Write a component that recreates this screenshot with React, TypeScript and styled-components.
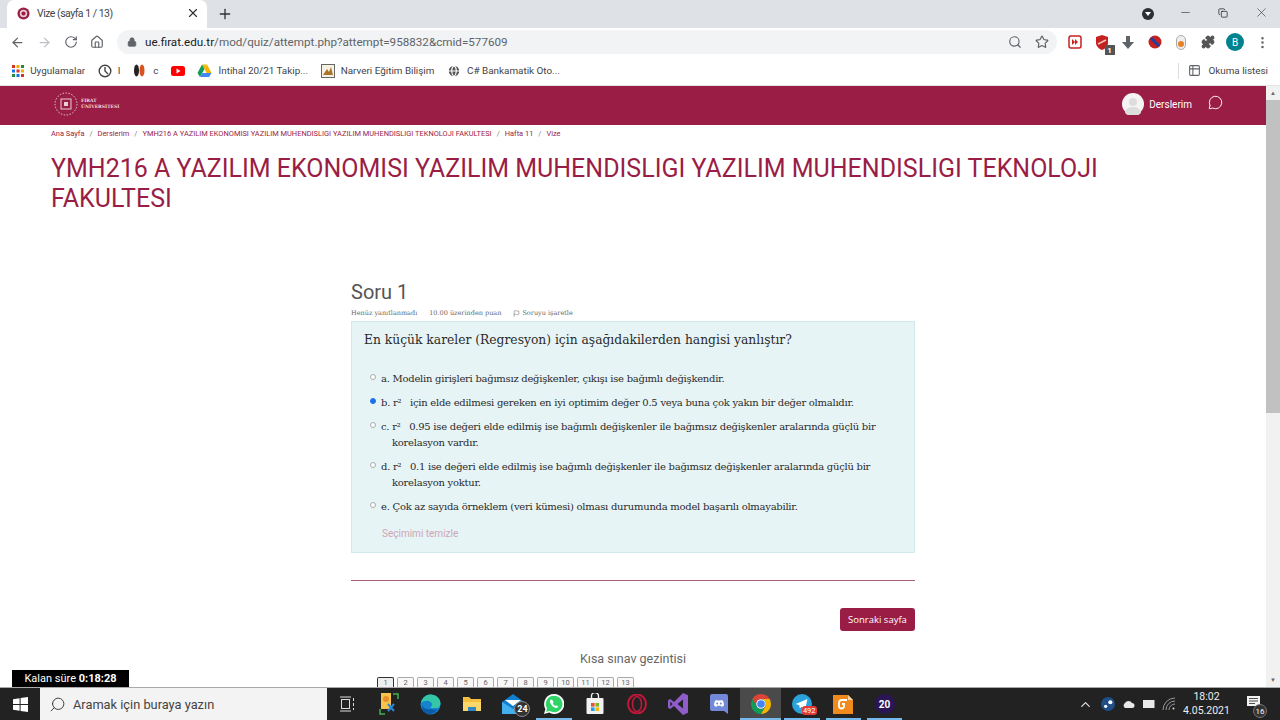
import React from 'react';
import styled, { createGlobalStyle } from 'styled-components';
import {
  ArrowLeft,
  ArrowRight,
  RotateCw,
  Home,
  Lock,
  Search,
  Star,
  Puzzle,
  MoreVertical,
  Plus,
  X,
  Minus,
  Copy,
  MessageCircle,
  Flag,
  Table2,
  ChevronUp,
  Globe,
} from 'lucide-react';

const GlobalStyle = createGlobalStyle`
  html, body {
    margin: 0;
    padding: 0;
    overflow: hidden;
    background: #fff;
  }
  * { box-sizing: border-box; }
`;

const SERIF = '"DejaVu Serif", serif';
const SANS = 'Roboto, "Liberation Sans", sans-serif';
const MAROON = '#9a1d45';

const OPTIONS = [
  { key: 'a', lines: ['a. Modelin girişleri bağımsız değişkenler, çıkışı ise bağımlı değişkendir.'] },
  { key: 'b', selected: true, lines: ['b. r²   için elde edilmesi gereken en iyi optimim değer 0.5 veya buna çok yakın bir değer olmalıdır.'] },
  { key: 'c', lines: ['c. r²   0.95 ise değeri elde edilmiş ise bağımlı değişkenler ile bağımsız değişkenler aralarında güçlü bir', 'korelasyon vardır.'] },
  { key: 'd', lines: ['d. r²   0.1 ise değeri elde edilmiş ise bağımlı değişkenler ile bağımsız değişkenler aralarında güçlü bir', 'korelasyon yoktur.'] },
  { key: 'e', lines: ['e. Çok az sayıda örneklem (veri kümesi) olması durumunda model başarılı olmayabilir.'] },
];

const CRUMBS = [
  'Ana Sayfa',
  'Derslerim',
  'YMH216 A YAZILIM EKONOMISI YAZILIM MUHENDISLIGI YAZILIM MUHENDISLIGI TEKNOLOJI FAKULTESI',
  'Hafta 11',
  'Vize',
];

const APP_COLORS = ['#d93025', '#f9ab00', '#1e8e3e', '#1a73e8', '#d93025', '#f9ab00', '#1e8e3e', '#1a73e8', '#d93025'];

const Favicon = () => (
  <svg width="13" height="13" viewBox="0 0 14 14">
    <circle cx="7" cy="7" r="6.5" fill="#9a1d45" />
    <circle cx="7" cy="7" r="4" fill="#e9c9d2" />
    <circle cx="7" cy="7" r="2.2" fill="#9a1d45" />
  </svg>
);

const AppsGrid = () => (
  <svg width="12" height="12" viewBox="0 0 12 12">
    {APP_COLORS.map((color, i) => (
      <rect key={i} x={(i % 3) * 4.5} y={Math.floor(i / 3) * 4.5} width="3" height="3" fill={color} />
    ))}
  </svg>
);

const Drive = () => (
  <svg width="15" height="14" viewBox="0 0 15 14">
    <polygon points="5,0.5 10,0.5 7.5,5" fill="#f4b400" />
    <polygon points="5,0.5 0.5,9 3,13 7.5,5" fill="#0f9d58" />
    <polygon points="10,0.5 14.5,9 9.5,9 7.5,5" fill="#f4b400" />
    <polygon points="3,13 12,13 14.5,9 5.4,9" fill="#4285f4" />
  </svg>
);

const YouTube = () => (
  <svg width="14" height="10" viewBox="0 0 14 10">
    <rect width="14" height="10" rx="2.5" fill="#f00" />
    <polygon points="5.5,2.5 9.5,5 5.5,7.5" fill="#fff" />
  </svg>
);

const WindowsLogo = () => (
  <svg width="15" height="15" viewBox="0 0 15 15">
    <polygon points="0,2.2 6.6,1.2 6.6,7 0,7" fill="#fff" />
    <polygon points="7.6,1 15,0 15,7 7.6,7" fill="#fff" />
    <polygon points="0,8 6.6,8 6.6,13.8 0,12.8" fill="#fff" />
    <polygon points="7.6,8 15,8 15,15 7.6,14" fill="#fff" />
  </svg>
);

const ChromeLogo = () => (
  <svg width="20" height="20" viewBox="0 0 20 20">
    <path d="M1.34 5A10 10 0 0 1 18.66 5H10A5 5 0 0 0 5.67 12.5Z" fill="#db4437" />
    <path d="M1.34 5A10 10 0 0 0 10 20L14.33 12.5A5 5 0 0 1 5.67 12.5Z" fill="#0f9d58" />
    <path d="M18.66 5A10 10 0 0 1 10 20L14.33 12.5A5 5 0 0 0 10 5Z" fill="#f4b400" />
    <circle cx="10" cy="10" r="4.8" fill="#fff" />
    <circle cx="10" cy="10" r="3.8" fill="#4285f4" />
  </svg>
);

const Edge = () => (
  <svg width="21" height="21" viewBox="0 0 21 21">
    <circle cx="10.5" cy="10.5" r="10" fill="#1583d0" />
    <path d="M1 9C2 3 7 .5 10.5 .5c6 0 10 4 10 9 0 3-2 4.5-4 4.5h-5c-1 0-1-1 0-2 1-1 1-3-1-4C8 6 4 6.5 1 9z" fill="#35c6a8" />
    <path d="M11 15c2 1 4 1 6.5 0-2 4-7 6-11 4.5-3-1.5-5-4.5-4-8 1 3 4 4.5 8.5 3.5z" fill="#0b5aa6" />
  </svg>
);

const Explorer = () => (
  <svg width="20" height="18" viewBox="0 0 20 18">
    <path d="M1 2h6l2 2h10v12H1z" fill="#f5bf3f" />
    <rect x="1" y="7" width="18" height="9" fill="#fbd668" />
    <rect x="6" y="12" width="8" height="4" fill="#2f86c9" />
  </svg>
);

const Mail = () => (
  <svg width="24" height="20" viewBox="0 0 24 20">
    <polygon points="1,8 12,0 23,8 23,20 1,20" fill="#0f7fd0" />
    <polygon points="1,8 12,15 23,8 23,20 1,20" fill="#43b0ee" />
    <polygon points="4,6 20,6 12,12" fill="#fff" />
  </svg>
);

const WhatsApp = () => (
  <svg width="20" height="20" viewBox="0 0 20 20">
    <path d="M10 0a10 10 0 0 0-8.6 15L0 20l5.2-1.4A10 10 0 1 0 10 0z" fill="#fff" />
    <path d="M10 1.8a8.2 8.2 0 0 0-7 12.5L2.2 17.8l3.6-.9A8.2 8.2 0 1 0 10 1.8z" fill="#2fd366" />
    <path d="M7 5.5c-1 .6-1.4 2-.6 3.7 1 2 2.6 3.6 4.8 4.5 1.4.5 2.6 0 3.1-1.1l-2-1.4-1 .8c-1-.4-2-1.4-2.5-2.5l.8-1-1.2-2.5z" fill="#fff" />
  </svg>
);

const Store = () => (
  <svg width="18" height="22" viewBox="0 0 18 22">
    <path d="M5.5 6V3a3.5 3.5 0 0 1 7 0v3" fill="none" stroke="#eee" strokeWidth="1.4" />
    <rect x="0.5" y="5" width="17" height="16" rx="1" fill="#f2f2f2" />
    <rect x="5" y="10" width="3.6" height="3.6" fill="#e8532b" />
    <rect x="9.4" y="10" width="3.6" height="3.6" fill="#7db821" />
    <rect x="5" y="14.4" width="3.6" height="3.6" fill="#1ea3e4" />
    <rect x="9.4" y="14.4" width="3.6" height="3.6" fill="#fbb80f" />
  </svg>
);

const Opera = () => (
  <svg width="20" height="20" viewBox="0 0 20 20">
    <ellipse cx="10" cy="10" rx="9" ry="9.5" fill="none" stroke="#c3173a" strokeWidth="2" />
    <ellipse cx="10" cy="10" rx="4.5" ry="7.5" fill="none" stroke="#c3173a" strokeWidth="1.6" />
  </svg>
);

const VisualStudio = () => (
  <svg width="20" height="22" viewBox="0 0 20 22">
    <path d="M15 0l5 2.2v17.6L15 22 6 13l-3.8 3L0 14.8V7.2L2.2 6 6 9zM15 6.5L9.5 11l5.5 4.5zM2.3 8.5v5L4.5 11z" fill="#8f5cc9" />
  </svg>
);

const Discord = () => (
  <svg width="18" height="20" viewBox="0 0 18 20">
    <path d="M2 0h14a2 2 0 0 1 2 2v18l-4-3H2a2 2 0 0 1-2-2V2a2 2 0 0 1 2-2z" fill="#7289da" />
    <path d="M4 11.5c0-3 1-5 2-5.500l1.500.5h3L12 6c1 .5 2 2.500 2 5.500-1 .9-2 1.200-2.600 1.200l-.6-.9H7.200l-.6.9C6 12.700 5 12.400 4 11.500z" fill="#fff" />
    <circle cx="7.2" cy="9.6" r="1" fill="#7289da" />
    <circle cx="10.8" cy="9.6" r="1" fill="#7289da" />
  </svg>
);

const Telegram = () => (
  <svg width="20" height="20" viewBox="0 0 22 22">
    <circle cx="11" cy="11" r="11" fill="#2aa3dd" />
    <polygon points="4,11 17,5.5 14.5,17 10.5,14 8.5,16 8,12.5" fill="#fff" />
  </svg>
);

const Foxit = () => (
  <svg width="20" height="20" viewBox="0 0 20 20">
    <path d="M0 1h15l5 5v14H0z" fill="#f08a1d" />
    <path d="M15 1l5 5h-5z" fill="#fbd49c" />
    <path d="M14 6H9a3 3 0 0 0-3 3v3a2.5 2.5 0 0 0 5 0V10H9" fill="none" stroke="#fff" strokeWidth="1.8" />
  </svg>
);

const Steam = () => (
  <svg width="14" height="14" viewBox="0 0 12 12">
    <circle cx="6" cy="6" r="6" fill="#1f4f86" />
    <circle cx="8" cy="4.5" r="1.8" fill="#fff" />
    <circle cx="4" cy="8" r="1.4" fill="#fff" />
  </svg>
);

const Wifi = () => (
  <svg width="14" height="14" viewBox="0 0 14 14" fill="none" stroke="#999" strokeWidth="1">
    <path d="M1 13A12 12 0 0 1 13 1" />
    <path d="M4 13a9 9 0 0 1 9-9" />
    <path d="M7 13a6 6 0 0 1 6-6" />
    <circle cx="11.5" cy="11.5" r="1" fill="#ddd" stroke="none" />
  </svg>
);

const LogoMark = () => (
  <svg width="24" height="24" viewBox="0 0 24 24" fill="none" stroke="#e8ccd6">
    <circle cx="12" cy="12" r="11" strokeDasharray="1.5 1.5" strokeWidth="1" />
    <rect x="7" y="7" width="10" height="10" strokeWidth="1" />
    <rect x="10" y="10" width="4" height="4" fill="#e8ccd6" stroke="none" />
  </svg>
);

const App: React.FC = () => {
  return (
    <Screen>
      <GlobalStyle />
      <TabStrip>
        <Tab>
          <Favicon />
          <TabTitle>Vize (sayfa 1 / 13)</TabTitle>
          <X size={14} color="#333" />
        </Tab>
        <NewTab>
          <Plus size={16} color="#333" />
        </NewTab>
        <StripSpacer />
        <ProfileDot />
        <WindowButton>
          <Minus size={13} strokeWidth={1.2} color="#333" />
        </WindowButton>
        <WindowButton>
          <Copy size={10} strokeWidth={1.8} color="#222" />
        </WindowButton>
        <WindowButton>
          <X size={15} strokeWidth={1} color="#333" />
        </WindowButton>
      </TabStrip>

      <Toolbar>
        <NavIcons>
          <ArrowLeft size={15} color="#5f6368" />
          <ArrowRight size={15} color="#bdc1c6" />
          <RotateCw size={14} color="#5f6368" />
          <Home size={14} color="#5f6368" />
        </NavIcons>
        <Omnibox>
          <Lock size={10} color="#5f6368" fill="#5f6368" />
          <UrlText>
            <strong>ue.firat.edu.tr</strong>/mod/quiz/attempt.php?attempt=958832&amp;cmid=577609
          </UrlText>
          <OmniIcons>
            <Search size={14} color="#5f6368" />
            <Star size={14} color="#5f6368" />
          </OmniIcons>
        </Omnibox>
        <Extensions>
          <ExtIcon>
            <svg width="14" height="14" viewBox="0 0 14 14">
              <rect x="1" y="1" width="12" height="12" rx="2" fill="none" stroke="#c5221f" strokeWidth="1.5" />
              <polygon points="4,4 7,7 4,10" fill="#c5221f" />
              <polygon points="7,4 10,7 7,10" fill="#c5221f" />
            </svg>
          </ExtIcon>
          <ExtIcon>
            <svg width="14" height="15" viewBox="0 0 14 15">
              <path d="M7 0l6 2v6c0 3-3 6-6 7-3-1-6-4-6-7V2z" fill="#c5221f" />
              <path d="M3 9l8-4" stroke="#f3c6c4" strokeWidth="1.5" />
            </svg>
            <ExtBadge>1</ExtBadge>
          </ExtIcon>
          <ExtIcon>
            <svg width="12" height="13" viewBox="0 0 12 13">
              <polygon points="4,0 8,0 8,6 12,6 6,13 0,6 4,6" fill="#5f6368" />
            </svg>
          </ExtIcon>
          <ExtIcon>
            <svg width="14" height="14" viewBox="0 0 14 14">
              <circle cx="7" cy="7" r="6.5" fill="#c5221f" />
              <path d="M3 3l8 8" stroke="#1f3f9e" strokeWidth="3" />
            </svg>
          </ExtIcon>
          <ExtIcon>
            <svg width="10" height="15" viewBox="0 0 10 15">
              <rect x="0.5" y="0.5" width="9" height="14" rx="4.5" fill="#eee" stroke="#aaa" />
              <circle cx="5" cy="9" r="3" fill="#e8822a" />
            </svg>
          </ExtIcon>
          <ExtIcon>
            <Puzzle size={14} color="#555" fill="#555" />
          </ExtIcon>
          <Avatar>B</Avatar>
          <MoreVertical size={15} color="#5f6368" />
        </Extensions>
      </Toolbar>

      <BookmarkBar>
        <Bookmark>
          <AppsGrid />
          <span>Uygulamalar</span>
        </Bookmark>
        <Bookmark>
          <svg width="14" height="14" viewBox="0 0 14 14" fill="none" stroke="#444" strokeWidth="1.4">
            <circle cx="7" cy="7" r="5.8" />
            <path d="M7 3v4l3 3" />
          </svg>
          <span>I</span>
        </Bookmark>
        <Bookmark>
          <svg width="14" height="13" viewBox="0 0 14 13">
            <ellipse cx="3.5" cy="6.5" rx="2.5" ry="6" fill="#222" />
            <ellipse cx="9" cy="6.5" rx="2.5" ry="6" fill="#d9531e" />
          </svg>
          <span>c</span>
        </Bookmark>
        <Bookmark>
          <YouTube />
        </Bookmark>
        <Bookmark>
          <Drive />
          <span>İntihal 20/21 Takip...</span>
        </Bookmark>
        <Bookmark>
          <svg width="14" height="14" viewBox="0 0 14 14">
            <rect x="0.5" y="0.5" width="13" height="13" fill="#f6f1e2" stroke="#666" />
            <path d="M2 11l4-6 2 3 2-5 2 8z" fill="#a8742a" />
          </svg>
          <span>Narveri Eğitim Bilişim</span>
        </Bookmark>
        <Bookmark>
          <Globe size={14} color="#fff" fill="#555" />
          <span>C# Bankamatik Oto...</span>
        </Bookmark>
        <StripSpacer />
        <ReadingList>
          <Table2 size={13} color="#5f6368" />
          <span>Okuma listesi</span>
        </ReadingList>
      </BookmarkBar>

      <Viewport>
        <PageScroll>
          <Navbar>
            <Brand>
              <LogoMark />
              <BrandText>
                <span>FIRAT</span>
                <span>ÜNİVERSİTESİ</span>
              </BrandText>
            </Brand>
            <NavRight>
              <UserPic>
                <svg width="22" height="22" viewBox="0 0 22 22">
                  <circle cx="11" cy="11" r="11" fill="#f4f4f4" />
                  <circle cx="11" cy="9" r="4" fill="#ddd" />
                  <path d="M3 20c1-5 4-6 8-6s7 1 8 6a11 11 0 0 1-16 0z" fill="#ddd" />
                </svg>
              </UserPic>
              <NavLabel>Derslerim</NavLabel>
              <MessageCircle size={15} color="#fff" strokeWidth={1.5} />
            </NavRight>
          </Navbar>

          <Breadcrumb>
            {CRUMBS.map((crumb, i) => (
              <React.Fragment key={crumb}>
                {i > 0 && <CrumbSep>/</CrumbSep>}
                <span>{crumb}</span>
              </React.Fragment>
            ))}
          </Breadcrumb>

          <CourseTitle>YMH216 A YAZILIM EKONOMISI YAZILIM MUHENDISLIGI YAZILIM MUHENDISLIGI TEKNOLOJI FAKULTESI</CourseTitle>

          <QuizColumn>
            <QuestionTitle>Soru 1</QuestionTitle>
            <QuestionInfo>
              <span>Henüz yanıtlanmadı</span>
              <span>10.00 üzerinden puan</span>
              <FlagLink>
                <Flag size={7} color="#777" />
                Soruyu işaretle
              </FlagLink>
            </QuestionInfo>
            <QuestionCard>
              <QuestionText>En küçük kareler (Regresyon) için aşağıdakilerden hangisi yanlıştır?</QuestionText>
              <Answers>
                {OPTIONS.map(opt => (
                  <Answer key={opt.key}>
                    <Radio $selected={!!opt.selected} />
                    <div>
                      {opt.lines.map((line, i) => (
                        <AnswerLine key={line} $indent={i > 0}>
                          {line}
                        </AnswerLine>
                      ))}
                    </div>
                  </Answer>
                ))}
              </Answers>
              <ClearChoice>Seçimimi temizle</ClearChoice>
            </QuestionCard>
            <Divider />
            <NextRow>
              <NextButton>Sonraki sayfa</NextButton>
            </NextRow>
            <QuizNavTitle>Kısa sınav gezintisi</QuizNavTitle>
            <QuizNavButtons>
              {Array.from({ length: 13 }, (_, i) => (
                <PageBox key={i} $current={i === 0}>
                  {i + 1}
                </PageBox>
              ))}
            </QuizNavButtons>
          </QuizColumn>
        </PageScroll>
        <Scrollbar>
          <ScrollArrow>▲</ScrollArrow>
          <ScrollThumb />
          <ScrollArrow>▼</ScrollArrow>
        </Scrollbar>
        <Timer>
          Kalan süre <b>0:18:28</b>
        </Timer>
      </Viewport>

      <Taskbar>
        <StartButton>
          <WindowsLogo />
        </StartButton>
        <SearchBox>
          <MirroredIcon>
            <Search size={17} color="#333" strokeWidth={1.3} />
          </MirroredIcon>
          <span>Aramak için buraya yazın</span>
        </SearchBox>
        <TaskIcons>
          <TaskIcon>
            <svg width="16" height="16" viewBox="0 0 16 16" fill="none" stroke="#ddd" strokeWidth="1">
              <rect x="1.5" y="3.5" width="8" height="9" />
              <path d="M0 1h11M0 15h11M13.5 2v3M13.5 7v3M13.5 12v2" />
            </svg>
          </TaskIcon>
          <TaskIcon>
            <svg width="20" height="22" viewBox="0 0 20 22">
              <rect x="2" y="0" width="10" height="16" fill="#f5c24a" />
              <circle cx="7" cy="6" r="3" fill="#e88e2e" />
              <path d="M9 11l6 7M15 11l-6 7" stroke="#2b88d8" strokeWidth="2" />
              <path d="M1 16v5h5M19 6V1h-5" stroke="#3fb34f" strokeWidth="1.5" fill="none" />
            </svg>
          </TaskIcon>
          <TaskIcon>
            <Edge />
          </TaskIcon>
          <TaskIcon>
            <Explorer />
          </TaskIcon>
          <TaskIcon>
            <Mail />
            <CountBadge>24</CountBadge>
          </TaskIcon>
          <TaskIcon $open>
            <WhatsApp />
          </TaskIcon>
          <TaskIcon>
            <Store />
          </TaskIcon>
          <TaskIcon>
            <Opera />
          </TaskIcon>
          <TaskIcon>
            <VisualStudio />
          </TaskIcon>
          <TaskIcon>
            <Discord />
          </TaskIcon>
          <TaskIcon $open $active>
            <ChromeLogo />
          </TaskIcon>
          <TaskIcon $open>
            <Telegram />
            <RedBadge>492</RedBadge>
          </TaskIcon>
          <TaskIcon $open>
            <Foxit />
          </TaskIcon>
          <TaskIcon $open>
            <PurpleCircle>20</PurpleCircle>
          </TaskIcon>
        </TaskIcons>
        <Tray>
          <ChevronUp size={15} color="#ddd" />
          <Steam />
          <svg width="13" height="8" viewBox="0 0 13 8">
            <path d="M3 8a3 3 0 0 1 0-5 4 4 0 0 1 7 0 2.5 2.5 0 0 1 0 5z" fill="#e8e8e8" />
          </svg>
          <svg width="12" height="8" viewBox="0 0 12 8">
            <rect x="0.5" y="0.5" width="10.5" height="7" fill="#e8e8e8" stroke="#e8e8e8" />
          </svg>
          <Wifi />
        </Tray>
        <Clock>
          <span>18:02</span>
          <span>4.05.2021</span>
        </Clock>
        <Notify>
          <svg width="13" height="12" viewBox="0 0 13 12">
            <path d="M0 0h13v10H0z" fill="#f2f2f2" />
            <path d="M2 2.5h9M2 5h9M2 7.5h6" stroke="#222" strokeWidth="0.8" />
          </svg>
          <NotifyCount>16</NotifyCount>
        </Notify>
      </Taskbar>
    </Screen>
  );
};

const Screen = styled.div`
  width: 1280px;
  height: 720px;
  display: flex;
  flex-direction: column;
  overflow: hidden;
  background: #fff;
  font-family: ${SANS};
`;

const TabStrip = styled.div`
  height: 28px;
  flex: none;
  display: flex;
  align-items: flex-end;
  background: #dee1e6;
  padding-left: 7px;
`;

const Tab = styled.div`
  width: 200px;
  height: 28px;
  background: #fff;
  border-radius: 7px 7px 0 0;
  display: flex;
  align-items: center;
  padding: 0 7px 2px 10px;
  gap: 6px;
`;

const TabTitle = styled.span`
  flex: 1;
  font-size: 10.5px;
  letter-spacing: -0.5px;
  color: #444;
  padding-left: 1px;
`;

const NewTab = styled.div`
  width: 36px;
  height: 28px;
  display: flex;
  align-items: center;
  justify-content: center;
  padding-bottom: 1px;
`;

const StripSpacer = styled.div`
  flex: 1;
`;

const ProfileDot = styled.div`
  width: 12px;
  height: 12px;
  border-radius: 50%;
  background: #2c2f33;
  align-self: center;
  margin-right: 12px;
  position: relative;

  &::after {
    content: '';
    position: absolute;
    left: 3px;
    top: 4px;
    border: 3px solid transparent;
    border-top: 4px solid #fff;
  }
`;

const WindowButton = styled.div`
  width: 38px;
  height: 28px;
  display: flex;
  align-items: center;
  justify-content: center;
  padding-bottom: 3px;
`;

const Toolbar = styled.div`
  height: 28px;
  flex: none;
  display: flex;
  align-items: center;
  background: #fff;
  padding: 2px 0 2px 10px;
`;

const NavIcons = styled.div`
  display: flex;
  align-items: center;
  gap: 12px;
  width: 107px;
`;

const Omnibox = styled.div`
  width: 940px;
  height: 24px;
  background: #f1f3f4;
  border-radius: 12px;
  display: flex;
  align-items: center;
  padding: 0 8px 0 10px;
`;

const UrlText = styled.div`
  flex: 1;
  margin-left: 8px;
  font-size: 11.66px;
  color: #5f6368;

  strong {
    font-weight: 400;
    color: #202124;
  }
`;

const OmniIcons = styled.div`
  display: flex;
  align-items: center;
  gap: 13px;
`;

const Extensions = styled.div`
  flex: 1;
  display: flex;
  align-items: center;
  padding-left: 10px;
  gap: 10.5px;
`;

const ExtIcon = styled.div`
  width: 16px;
  height: 16px;
  display: flex;
  align-items: center;
  justify-content: center;
  position: relative;
`;

const ExtBadge = styled.span`
  position: absolute;
  right: -5px;
  bottom: -5px;
  width: 10px;
  height: 10px;
  background: #555;
  color: #fff;
  font-size: 8px;
  font-weight: 700;
  display: flex;
  align-items: center;
  justify-content: center;
`;

const Avatar = styled.div`
  width: 18px;
  height: 18px;
  border-radius: 50%;
  background: #00838f;
  color: #fff;
  font-size: 10px;
  display: flex;
  align-items: center;
  justify-content: center;
`;

const BookmarkBar = styled.div`
  height: 30px;
  flex: none;
  display: flex;
  align-items: center;
  background: #fff;
  padding: 0 12px;
  gap: 12.5px;
  border-bottom: 1px solid #e3e4e6;
  font-size: 9.9px;
  color: #444;
`;

const Bookmark = styled.div`
  display: flex;
  align-items: center;
  gap: 6.2px;
  white-space: nowrap;
`;

const ReadingList = styled.div`
  display: flex;
  align-items: center;
  gap: 7px;
  height: 16px;
  padding-left: 9px;
  border-left: 1px solid #ddd;
`;

const Viewport = styled.div`
  flex: 1;
  min-height: 0;
  display: flex;
  position: relative;
  overflow: hidden;
`;

const PageScroll = styled.div`
  flex: 1;
  min-width: 0;
  overflow: hidden;
`;

const Navbar = styled.div`
  height: 39px;
  background: ${MAROON};
  display: flex;
  align-items: center;
  justify-content: space-between;
  padding: 0 43px 3px 54px;
`;

const Brand = styled.div`
  display: flex;
  align-items: center;
  gap: 3px;
`;

const BrandText = styled.div`
  display: flex;
  flex-direction: column;
  font-family: ${SERIF};
  font-size: 4.5px;
  line-height: 6px;
  color: #f0d7df;
  font-weight: 700;
`;

const NavRight = styled.div`
  display: flex;
  align-items: center;

  > svg {
    margin-top: -3px;
  }
`;

const UserPic = styled.div`
  width: 22px;
  height: 22px;
  display: flex;
  margin-right: 5px;
`;

const NavLabel = styled.span`
  color: #fff;
  font-size: 10px;
  margin-right: 16px;
`;

const Breadcrumb = styled.div`
  display: flex;
  align-items: center;
  gap: 5px;
  padding: 1px 0 0 51px;
  height: 15px;
  font-size: 7.45px;
  color: ${MAROON};
  white-space: nowrap;
`;

const CrumbSep = styled.span`
  color: #777;
`;

const CourseTitle = styled.h1`
  margin: 14px 0 0;
  padding: 0 150px 0 51px;
  font-family: ${SANS};
  font-weight: 400;
  font-size: 25px;
  line-height: 30px;
  color: ${MAROON};
`;

const QuizColumn = styled.div`
  width: 564px;
  margin: 65px 0 0 351px;
`;

const QuestionTitle = styled.h2`
  margin: 0;
  font-family: ${SANS};
  font-weight: 400;
  font-size: 20px;
  line-height: 26px;
  color: #555;
`;

const QuestionInfo = styled.div`
  display: flex;
  align-items: center;
  gap: 12px;
  height: 16px;
  font-family: ${SERIF};
  font-size: 6.5px;
  color: #666;
`;

const FlagLink = styled.span`
  display: flex;
  align-items: center;
  gap: 2px;
`;

const QuestionCard = styled.div`
  height: 232px;
  background: #e7f4f6;
  border: 1px solid #d2e9ec;
  padding: 8px 12px;
  font-family: ${SERIF};
  color: #2b2b2b;
`;

const QuestionText = styled.div`
  font-size: 12.3px;
  line-height: 20px;
`;

const Answers = styled.div`
  margin-top: 21px;
  display: flex;
  flex-direction: column;
  gap: 8px;
`;

const Answer = styled.div`
  display: flex;
  align-items: flex-start;
`;

const Radio = styled.span<{ $selected: boolean }>`
  flex: none;
  width: 6px;
  height: 6px;
  margin: 3px 5px 0 6px;
  border-radius: 50%;
  border: 1px solid ${p => (p.$selected ? '#1a73e8' : '#aaa')};
  background: ${p => (p.$selected ? '#1a73e8' : '#fff')};
`;

const AnswerLine = styled.div<{ $indent: boolean }>`
  white-space: pre;
  font-size: 10px;
  letter-spacing: -0.26px;
  line-height: 16px;
  padding-left: ${p => (p.$indent ? '11px' : '0')};
`;

const ClearChoice = styled.div`
  margin: 12px 0 0 18px;
  font-family: ${SANS};
  font-size: 10px;
  line-height: 14px;
  color: #cda5b5;
`;

const Divider = styled.div`
  height: 1px;
  background: #a85a76;
  margin-top: 27px;
`;

const NextRow = styled.div`
  display: flex;
  justify-content: flex-end;
  margin-top: 27px;
`;

const NextButton = styled.div`
  width: 75px;
  height: 23px;
  display: flex;
  align-items: center;
  justify-content: center;
  background: ${MAROON};
  border-radius: 3px;
  color: #fff;
  font-family: "Open Sans", sans-serif;
  font-size: 9.5px;
`;

const QuizNavTitle = styled.div`
  text-align: center;
  margin-top: 20px;
  font-size: 12.5px;
  line-height: 16px;
  color: #666;
`;

const QuizNavButtons = styled.div`
  display: flex;
  gap: 3px;
  margin: 10px 0 0 26px;
`;

const PageBox = styled.div<{ $current: boolean }>`
  width: 17px;
  height: 10px;
  border: 1px solid ${p => (p.$current ? '#333' : '#aaa')};
  border-bottom: 0;
  border-radius: 2px 2px 0 0;
  background: ${p => (p.$current ? '#eee' : '#f8f8f8')};
  font-size: 7.5px;
  color: #666;
  text-align: center;
  line-height: 9px;
`;

const Scrollbar = styled.div`
  flex: none;
  width: 14px;
  background: #f1f1f1;
  display: flex;
  flex-direction: column;
`;

const ScrollArrow = styled.div`
  height: 14px;
  flex: none;
  font-size: 6px;
  line-height: 14px;
  text-align: center;
  color: #666;
`;

const ScrollThumb = styled.div`
  height: 313px;
  background: #c1c1c1;
  margin-bottom: auto;
`;

const Timer = styled.div`
  position: absolute;
  left: 12px;
  bottom: 0;
  width: 117px;
  height: 17px;
  background: #000;
  color: #fff;
  font-size: 11px;
  line-height: 17px;
  text-align: center;
`;

const Taskbar = styled.div`
  height: 33px;
  flex: none;
  display: flex;
  align-items: center;
  background: #222;
  border-top: 1px solid #aaa;
  color: #fff;
`;

const StartButton = styled.div`
  width: 40px;
  display: flex;
  justify-content: center;
`;

const SearchBox = styled.div`
  width: 287px;
  height: 32px;
  background: #f3f3f3;
  display: flex;
  align-items: center;
  gap: 7px;
  padding-left: 9px;
  font-size: 12.8px;
  color: #444;
`;

const MirroredIcon = styled.span`
  display: flex;
  transform: scaleX(-1);
`;

const TaskIcons = styled.div`
  display: flex;
  height: 32px;
`;

const TaskIcon = styled.div<{ $open?: boolean; $active?: boolean }>`
  width: 41.3px;
  height: 32px;
  display: flex;
  align-items: center;
  justify-content: center;
  position: relative;
  background: ${p => (p.$active ? '#4a4a4a' : 'transparent')};

  &::after {
    content: '';
    display: ${p => (p.$open ? 'block' : 'none')};
    position: absolute;
    bottom: 0;
    height: 2px;
    left: ${p => (p.$active ? '0' : '3px')};
    right: ${p => (p.$active ? '0' : '3px')};
    background: #76b9ed;
  }
`;

const CountBadge = styled.span`
  position: absolute;
  right: 3px;
  bottom: 3px;
  width: 16px;
  height: 16px;
  border-radius: 50%;
  background: #333;
  border: 1px solid #888;
  font-size: 9px;
  font-weight: 700;
  display: flex;
  align-items: center;
  justify-content: center;
`;

const RedBadge = styled.span`
  position: absolute;
  right: 6px;
  bottom: 5px;
  padding: 0 1px;
  background: #e53935;
  border-radius: 3px;
  font-size: 7.5px;
  line-height: 9px;
`;

const PurpleCircle = styled.div`
  width: 20px;
  height: 20px;
  border-radius: 50%;
  background: #2a1556;
  color: #fff;
  font-size: 10px;
  font-weight: 700;
  display: flex;
  align-items: center;
  justify-content: center;
`;

const Tray = styled.div`
  margin-left: auto;
  display: flex;
  align-items: center;
  gap: 7.5px;
`;

const Clock = styled.div`
  width: 53px;
  margin-left: 4px;
  display: flex;
  flex-direction: column;
  align-items: center;
  font-size: 10.5px;
  line-height: 14px;
  color: #eee;
  white-space: nowrap;
`;

const Notify = styled.div`
  width: 40px;
  height: 32px;
  margin-right: 7px;
  display: flex;
  align-items: center;
  justify-content: center;
  padding-bottom: 4px;
  position: relative;
`;

const NotifyCount = styled.span`
  position: absolute;
  right: 6px;
  bottom: 2px;
  width: 14px;
  height: 14px;
  border-radius: 50%;
  background: #333;
  border: 1px solid #777;
  font-size: 8px;
  display: flex;
  align-items: center;
  justify-content: center;
`;

export default App;
